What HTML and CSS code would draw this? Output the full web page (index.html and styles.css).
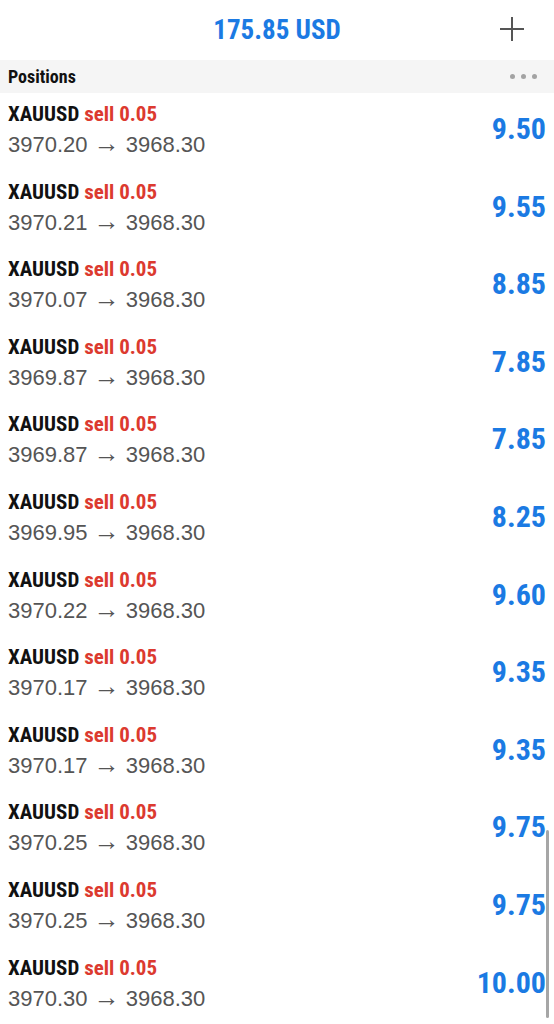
FILE: index.html
```html
<!DOCTYPE html>
<html lang="en">
<head>
    <meta charset="UTF-8">
    <meta name="viewport" content="width=device-width, initial-scale=1.0">
    <title>Trade</title>
    <link rel="stylesheet" href="styles.css">
</head>
<body>
    <div class="header">
        <span></span>
        <span class="balance">175.85 USD</span>
        <span class="add">
            <svg width="24" height="24" viewBox="0 0 24 24"><path d="M12 0v24M0 12h24" stroke="#555" stroke-width="2" fill="none"/></svg>
        </span>
    </div>

    <div class="section">
        <span class="section-title">Positions</span>
        <span class="dots"><i></i><i></i><i></i></span>
    </div>

    <div class="list" id="list"></div>

    <div class="scrollbar"></div>

    <script type="text/javascript">
        var rows = [
            ["3970.20", "9.50"],
            ["3970.21", "9.55"],
            ["3970.07", "8.85"],
            ["3969.87", "7.85"],
            ["3969.87", "7.85"],
            ["3969.95", "8.25"],
            ["3970.22", "9.60"],
            ["3970.17", "9.35"],
            ["3970.17", "9.35"],
            ["3970.25", "9.75"],
            ["3970.25", "9.75"],
            ["3970.30", "10.00"]
        ];
        var html = "";
        for (var i = 0; i < rows.length; i++) {
            html += `
                <div class="row">
                    <div class="info">
                        <div class="name">XAUUSD <span class="sell">sell 0.05</span></div>
                        <div class="price">${rows[i][0]} <span class="arrow">&rarr;</span> 3968.30</div>
                    </div>
                    <div class="profit">${rows[i][1]}</div>
                </div>
            `;
        }
        document.getElementById('list').innerHTML = html;
    </script>
</body>
</html>
```

FILE: styles.css
```css
body {
    font-family: "Roboto Condensed", Roboto, sans-serif;
    margin: 0;
    padding: 0;
    background-color: #fff;
    color: #111;
    position: relative;
    overflow: hidden;
    height: 1024px;
}
.header {
    height: 60px;
    display: grid;
    grid-template-columns: 1fr auto 1fr;
    align-items: center;
}
.balance {
    font-weight: bold;
    font-size: 27px;
    color: #1b7ae3;
    margin-top: -1px;
}
.add {
    justify-self: end;
    padding-right: 30px;
    height: 24px;
    margin-top: -2px;
}
.section {
    height: 33px;
    background-color: #f5f5f5;
    display: flex;
    align-items: center;
    justify-content: space-between;
    padding: 0 17px 0 8px;
}
.section-title {
    font-weight: bold;
    font-size: 18px;
}
.dots {
    display: flex;
    gap: 6px;
}
.dots i {
    width: 5px;
    height: 5px;
    border-radius: 50%;
    background-color: #a3a3a3;
}
.row {
    height: 77.6px;
    box-sizing: border-box;
    display: flex;
    justify-content: space-between;
    align-items: flex-start;
    padding: 9px 8px 0 8px;
}
.name {
    font-weight: bold;
    font-size: 21px;
    line-height: 24px;
}
.sell {
    color: #dc3a2f;
}
.price {
    font-family: "Liberation Sans", Arial, sans-serif;
    font-size: 22px;
    color: #555;
    line-height: 26px;
    margin-top: 6px;
}
.arrow {
    font-size: 26px;
    line-height: 20px;
}
.profit {
    font-weight: bold;
    font-size: 30px;
    line-height: 36px;
    color: #1b7ae3;
    margin-top: 9px;
}
.scrollbar {
    position: absolute;
    left: 546px;
    top: 830px;
    width: 3px;
    height: 188px;
    border-radius: 2px;
    background-color: #a6a6a6;
}
```
